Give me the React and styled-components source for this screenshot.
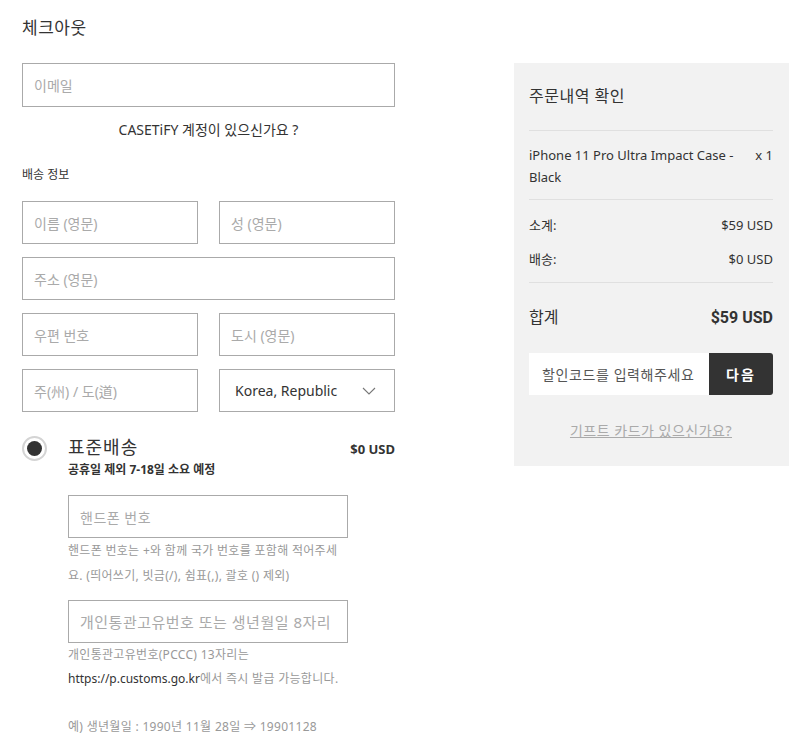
import React from 'react';
import styled, { createGlobalStyle } from 'styled-components';

const GlobalStyle = createGlobalStyle`
  body {
    margin: 0;
    background: #fff;
    font-family: "Noto Sans", "Noto Sans CJK KR", sans-serif;
    color: #333;
  }
`;

const Page = styled.div`
  display: flex;
  align-items: flex-start;
  padding: 16px 13px 0 22px;
  gap: 119px;
`;

const Left = styled.div`
  width: 373px;
  display: flex;
  flex-direction: column;
`;

const Title = styled.h1`
  margin: 0;
  font-size: 17px;
  font-weight: 400;
  line-height: 24px;
  letter-spacing: 0.5px;
  color: #333;
`;

const Field = styled.div`
  height: ${(p) => p.h || 43}px;
  box-sizing: border-box;
  border: 1px solid #aaa;
  display: flex;
  align-items: center;
  justify-content: space-between;
  padding: 0 18px 0 ${(p) => (p.filled ? 15 : 11)}px;
  font-size: 14px;
  color: ${(p) => (p.filled ? '#333' : '#aaa')};
  min-width: 0;
  white-space: nowrap;
`;

const EmailField = styled(Field)`
  margin-top: 23px;
`;

const AccountLink = styled.div`
  margin-top: 14px;
  text-align: center;
  font-size: 14px;
  line-height: 18px;
  color: #333;
`;

const SectionLabel = styled.div`
  margin-top: 28px;
  font-size: 12px;
  line-height: 16px;
  color: #333;
`;

const Fields = styled.div`
  margin-top: 18px;
  display: flex;
  flex-direction: column;
  gap: 13px;
`;

const Row = styled.div`
  display: grid;
  grid-template-columns: 1fr 1fr;
  gap: 21px;
`;

const Shipping = styled.div`
  margin-top: 24px;
  display: flex;
  align-items: flex-start;
`;

const Radio = styled.div`
  width: 25px;
  height: 25px;
  box-sizing: border-box;
  border-radius: 50%;
  border: 2px solid #d4d4d4;
  display: flex;
  align-items: center;
  justify-content: center;
  &::after {
    content: '';
    width: 15px;
    height: 15px;
    border-radius: 50%;
    background: #333;
  }
`;

const ShipBody = styled.div`
  margin-left: 21px;
  flex: 1;
  display: flex;
  flex-direction: column;
`;

const ShipHead = styled.div`
  display: flex;
  justify-content: space-between;
  align-items: baseline;
`;

const ShipName = styled.div`
  font-size: 18px;
  line-height: 22px;
  letter-spacing: 1px;
  color: #333;
`;

const ShipPrice = styled.div`
  font-size: 13px;
  font-weight: 700;
  color: #333;
`;

const ShipNote = styled.div`
  margin-top: 3px;
  font-size: 12px;
  font-weight: 700;
  line-height: 17px;
  color: #333;
`;

const SubField = styled(Field)`
  width: 280px;
  margin-top: ${(p) => p.top}px;
  font-size: ${(p) => p.size || 14}px;
  letter-spacing: 0.5px;
`;

const Help = styled.div`
  width: 282px;
  font-size: 12px;
  line-height: ${(p) => p.lh || 25}px;
  letter-spacing: 0.3px;
  color: #999;
`;

const Dark = styled.span`
  color: #333;
  letter-spacing: 0;
`;

const Summary = styled.div`
  width: 275px;
  box-sizing: border-box;
  margin-top: 47px;
  background: #f2f2f2;
  padding: 20px 16px 26px 15px;
  display: flex;
  flex-direction: column;
`;

const SummaryTitle = styled.div`
  font-size: 16px;
  line-height: 26px;
  letter-spacing: 0.5px;
  color: #333;
  padding-bottom: 21px;
  border-bottom: 1px solid #e0e0e0;
`;

const Item = styled.div`
  display: flex;
  justify-content: space-between;
  font-size: 13px;
  line-height: 22px;
  color: #333;
  padding: 13px 0 11px;
  border-bottom: 1px solid #e0e0e0;
`;

const ItemName = styled.span`
  width: 224px;
`;

const Qty = styled.span`
  white-space: nowrap;
`;

const Line = styled.div`
  display: flex;
  justify-content: space-between;
  font-size: 13px;
  line-height: 20px;
  color: #333;
  margin-top: ${(p) => p.top}px;
`;

const Divider = styled.div`
  margin-top: 13px;
  border-top: 1px solid #e0e0e0;
`;

const Total = styled.div`
  display: flex;
  justify-content: space-between;
  align-items: baseline;
  margin-top: 22px;
  font-size: 16px;
  line-height: 24px;
  color: #333;
`;

const TotalPrice = styled.span`
  font-weight: 700;
  font-family: Roboto, "Noto Sans CJK KR", sans-serif;
`;

const Coupon = styled.div`
  display: flex;
  margin-top: 23px;
  height: 42px;
`;

const CouponInput = styled.div`
  flex: 1;
  background: #fff;
  display: flex;
  align-items: center;
  padding-left: 13px;
  font-size: 14px;
  letter-spacing: 0.6px;
  color: #555;
  white-space: nowrap;
`;

const NextButton = styled.div`
  width: 64px;
  background: #333;
  color: #fff;
  border-radius: 0 3px 3px 0;
  display: flex;
  align-items: center;
  justify-content: center;
  font-size: 14px;
  font-weight: 700;
  letter-spacing: 2px;
`;

const GiftLink = styled.div`
  margin-top: 27px;
  text-align: center;
  font-size: 14px;
  line-height: 18px;
  letter-spacing: 0.5px;
  color: #aaa;
  text-decoration: underline;
`;

const Chevron = () => (
  <svg width="14" height="8" viewBox="0 0 14 8" fill="none">
    <path d="M1 1l6 6 6-6" stroke="#777" strokeWidth="1.1" />
  </svg>
);

export default function App() {
  return (
    <>
      <GlobalStyle />
      <Page>
        <Left>
          <Title>체크아웃</Title>
          <EmailField h={44}>이메일</EmailField>
          <AccountLink>CASETiFY 계정이 있으신가요 ?</AccountLink>
          <SectionLabel>배송 정보</SectionLabel>
          <Fields>
            <Row>
              <Field>이름 (영문)</Field>
              <Field>성 (영문)</Field>
            </Row>
            <Field>주소 (영문)</Field>
            <Row>
              <Field>우편 번호</Field>
              <Field>도시 (영문)</Field>
            </Row>
            <Row>
              <Field>주(州) / 도(道)</Field>
              <Field filled>
                <span>Korea, Republic</span>
                <Chevron />
              </Field>
            </Row>
          </Fields>
          <Shipping>
            <Radio />
            <ShipBody>
              <ShipHead>
                <ShipName>표준배송</ShipName>
                <ShipPrice>$0 USD</ShipPrice>
              </ShipHead>
              <ShipNote>공휴일 제외 7-18일 소요 예정</ShipNote>
              <SubField top={17}>핸드폰 번호</SubField>
              <Help>
                핸드폰 번호는 +와 함께 국가 번호를 포함해 적어주세요. (띄어쓰기, 빗금(/), 쉼표(,), 괄호 () 제외)
              </Help>
              <SubField top={12} size={15}>개인통관고유번호 또는 생년월일 8자리</SubField>
              <Help lh={24}>
                개인통관고유번호(PCCC) 13자리는
                <br />
                <Dark>https://p.customs.go.kr</Dark>에서 즉시 발급 가능합니다.
                <br />
                <br />
                예) 생년월일 : 1990년 11월 28일 ⇒ 19901128
              </Help>
            </ShipBody>
          </Shipping>
        </Left>
        <Summary>
          <SummaryTitle>주문내역 확인</SummaryTitle>
          <Item>
            <ItemName>iPhone 11 Pro Ultra Impact Case - Black</ItemName>
            <Qty>x 1</Qty>
          </Item>
          <Line top={15}>
            <span>소계:</span>
            <span>$59 USD</span>
          </Line>
          <Line top={14}>
            <span>배송:</span>
            <span>$0 USD</span>
          </Line>
          <Divider />
          <Total>
            <span>합계</span>
            <TotalPrice>$59 USD</TotalPrice>
          </Total>
          <Coupon>
            <CouponInput>할인코드를 입력해주세요</CouponInput>
            <NextButton>다음</NextButton>
          </Coupon>
          <GiftLink>기프트 카드가 있으신가요?</GiftLink>
        </Summary>
      </Page>
    </>
  );
}
